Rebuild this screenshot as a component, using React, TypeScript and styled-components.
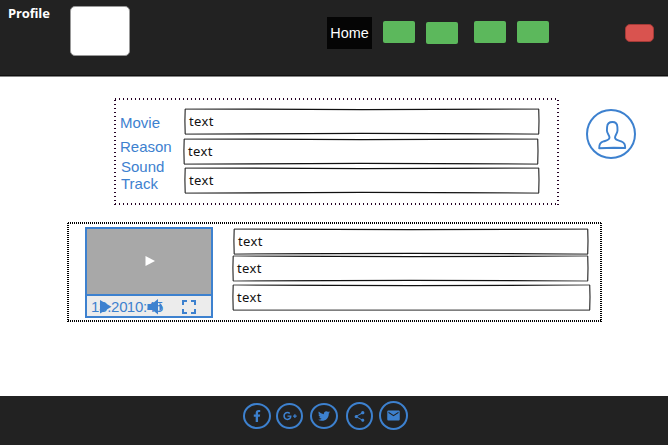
import React from "react";
import styled, { createGlobalStyle } from "styled-components";
import { FaFacebookF, FaGooglePlusG, FaTwitter } from "react-icons/fa";
import { MdEmail, MdShare } from "react-icons/md";

const BLUE = "#3d81cf";

const GlobalStyle = createGlobalStyle`
  * { box-sizing: border-box; }
  body { margin: 0; background: #fff; overflow: hidden; }
`;

const Page = styled.div`
  width: 668px;
  height: 445px;
  display: flex;
  flex-direction: column;
  font-family: "Liberation Sans", Arial, sans-serif;
  font-size: 15px;
  color: ${BLUE};
`;

const Header = styled.header`
  height: 77px;
  flex: none;
  display: flex;
  align-items: flex-start;
  background: #222;
  border-bottom: 1px solid #858585;
  box-shadow: inset 0 -1px #101010;
`;

const Brand = styled.div`
  width: 62px;
  padding: 5px 0 0 8px;
  font: bold 13px/17px "Open Sans", "Noto Sans", sans-serif;
  letter-spacing: -0.15px;
  color: #fff;
`;

const Logo = styled.div`
  width: 60px;
  height: 50px;
  margin: 6px 0 0 8px;
  background: #fff;
  border: 1px solid #999;
  border-radius: 5px;
`;

const Nav = styled.nav`
  display: flex;
  align-items: flex-start;
  margin: 17px 0 0 197px;
`;

const ActiveLink = styled.a`
  width: 45px;
  height: 32px;
  font-size: 14.4px;
  line-height: 32px;
  text-align: center;
  color: #fff;
  background: #050505;
`;

const NavButton = styled.button<{ $gap: number; $drop?: number }>`
  width: 32px;
  height: 22px;
  padding: 0;
  margin: ${(p) => 4 + (p.$drop ?? 0)}px 0 0 ${(p) => p.$gap}px;
  border: 0;
  border-radius: 2px;
  background: #5cb85c;
`;

const DangerButton = styled.button`
  width: 29px;
  height: 18px;
  padding: 0;
  margin: 24px 0 0 76px;
  border: 1px solid #a43a37;
  border-radius: 5px;
  background: #d9534f;
`;

const Main = styled.main`
  height: 319px;
  flex: none;
`;

const TopRow = styled.div`
  display: flex;
  align-items: flex-start;
  padding: 21px 0 0 114px;
`;

const DottedPanel = styled.section<{ $width: number; $height: number; $pitch: number; $ink: string }>`
  width: ${(p) => p.$width}px;
  height: ${(p) => p.$height}px;
  flex: none;
  display: flex;
  align-items: flex-start;
  ${(p) => {
    const across = `linear-gradient(to right, ${p.$ink} 1px, transparent 1px)`;
    const down = `linear-gradient(to bottom, ${p.$ink} 1px, transparent 1px)`;
    const half = p.$pitch / 2;
    return `background:
      ${across} 1px 0 / ${p.$pitch}px 2px repeat-x,
      ${across} 1px 100% / ${p.$pitch}px 2px repeat-x,
      ${down} 0 ${half}px / 2px ${p.$pitch}px repeat-y,
      ${down} 100% ${half}px / 2px ${p.$pitch}px repeat-y;`;
  }}
`;

const Labels = styled.div`
  width: 69px;
  padding: 16px 0 0 6px;
  line-height: 17px;
`;

const Label = styled.div<{ $gap?: number; $indent?: number }>`
  margin: ${(p) => p.$gap ?? 0}px 0 0 ${(p) => p.$indent ?? 0}px;
`;

const Fields = styled.div<{ $top: number }>`
  display: flex;
  flex-direction: column;
  padding-top: ${(p) => p.$top}px;
`;

const FieldBox = styled.div<{ $width: number; $gap: number; $indent: number }>`
  position: relative;
  width: ${(p) => p.$width}px;
  height: 27px;
  margin: ${(p) => p.$gap}px 0 0 ${(p) => p.$indent}px;
  padding-left: 5px;
  font: 13px/26px "Noto Sans", sans-serif;
  letter-spacing: 0.4px;
  color: #111;
`;

const Outline = styled.svg`
  position: absolute;
  inset: 0;
  overflow: visible;
`;

const Avatar = styled.svg`
  margin: 11px 0 0 27px;
`;

const BottomRow = styled.div`
  padding: 17px 0 0 67px;
`;

const Player = styled.div`
  width: 128px;
  height: 91px;
  margin: 5px 19px 0 18px;
  border: 2px solid ${BLUE};
  background: #ececec;
`;

const Screen = styled.div`
  height: 66px;
  display: flex;
  align-items: center;
  justify-content: center;
  padding-left: 2px;
  background: #a8a8a8;
  border-bottom: 2px solid ${BLUE};
  height: 67px;
`;

const Controls = styled.div`
  position: relative;
  height: 20px;
  padding-left: 4px;
  display: flex;
  line-height: 22px;
`;

const Time = styled.span<{ $shift?: number }>`
  margin-left: ${(p) => p.$shift ?? 0}px;
  letter-spacing: -0.25px;
`;

const ControlIcons = styled.svg`
  position: absolute;
  left: 0;
  top: 0;
`;

const Footer = styled.footer`
  height: 49px;
  flex: none;
  display: flex;
  align-items: flex-start;
  padding-left: 243px;
  background: #222;
`;

const Social = styled.a<{ $w: number; $h: number; $top: number; $gap?: number; $size: number }>`
  width: ${(p) => p.$w}px;
  height: ${(p) => p.$h}px;
  margin: ${(p) => p.$top}px 0 0 ${(p) => p.$gap ?? 0}px;
  display: flex;
  align-items: center;
  justify-content: center;
  border: 2px solid ${BLUE};
  border-radius: 50%;
  font-size: ${(p) => p.$size}px;
  color: ${BLUE};
`;

type FieldProps = { id: string; width?: number; gap?: number; indent?: number; flatBottom?: boolean };

function Field({ id, width = 356, gap = 0, indent = 0, flatBottom }: FieldProps) {
  const r = width - 1;
  const m = width * 0.5;
  return (
    <FieldBox $width={width} $gap={gap} $indent={indent}>
      <Outline width={width} height={27} fill="none">
        <defs>
          <linearGradient id={id} gradientUnits="userSpaceOnUse" x1="0" y1="0" x2={width} y2="0">
            <stop offset="0" stopColor="#555" />
            <stop offset="0.2" stopColor="#111" />
            <stop offset="0.8" stopColor="#111" />
            <stop offset="1" stopColor="#555" />
          </linearGradient>
        </defs>
        <path d={`M1 1 L${m} 1.6 L${r} 1`} stroke={`url(#${id})`} strokeWidth="1.25" />
        <path
          d={flatBottom ? `M1 26 H${r}` : `M1 26 L${m} 25.4 L${r} 26`}
          stroke={flatBottom ? "#555" : `url(#${id})`}
          strokeWidth="1.25"
        />
        <path d={`M1.2 1 L0.9 13 L1.2 26 M${r - 0.3} 1 L${r} 13 L${r - 0.3} 26`} stroke="#333" strokeWidth="1.2" />
      </Outline>
      text
    </FieldBox>
  );
}

export default function App() {
  return (
    <Page>
      <GlobalStyle />
      <Header>
        <Brand>Profile</Brand>
        <Logo />
        <Nav>
          <ActiveLink>Home</ActiveLink>
          <NavButton $gap={11} />
          <NavButton $gap={11} $drop={1} />
          <NavButton $gap={16} />
          <NavButton $gap={11} />
        </Nav>
        <DangerButton />
      </Header>
      <Main>
        <TopRow>
          <DottedPanel $width={445} $height={107} $pitch={4} $ink="#240024">
            <Labels>
              <Label>Movie</Label>
              <Label $gap={7}>Reason</Label>
              <Label $gap={3} $indent={1}>Sound</Label>
              <Label $indent={1}>Track</Label>
            </Labels>
            <Fields $top={10}>
              <Field id="movie" indent={1} />
              <Field id="reason" gap={3} />
              <Field id="track" gap={2} indent={1} />
            </Fields>
          </DottedPanel>
          <Avatar width="50" height="50" viewBox="0 0 50 50" fill="none" stroke={BLUE}>
            <circle cx="25" cy="25" r="24" strokeWidth="2" />
            <path
              d="M13.2 39.2 C13 35.5 14.2 33.4 17.5 32.4 C20.8 31.4 23.4 31.2 23.5 28.5 C23.5 26.5 21 24.2 20.9 21.5 L21.1 18 C21.3 14.5 23.2 13 26.5 13 C29.7 13 31.2 14.7 31.4 18 L31.5 21.5 C31.4 24.2 29 26.5 29 28.5 C29 31.2 32 31.2 35.2 32.4 C38.2 33.5 39.4 35.5 39.2 39 L28 38.7 Z"
              strokeWidth="1.9"
              strokeLinejoin="round"
            />
          </Avatar>
        </TopRow>
        <BottomRow>
          <DottedPanel $width={535} $height={100} $pitch={2} $ink="#000">
            <Player>
              <Screen>
                <svg width="10" height="14" fill="#fff">
                  <path d="M0.5 1 L10 6 L0.5 11 Z" />
                </svg>
              </Screen>
              <Controls>
                <Time>13.20</Time>
                <Time $shift={-0.5}>10:45</Time>
                <ControlIcons width="124" height="20" fill={BLUE}>
                  <path d="M13 4 L24.5 10.7 L13 17.5 Z" />
                  <path d="M60.5 8 H65 L71 3 V18.5 L65 13.5 H60.5 Z" />
                  <path d="M72.5 6.5 Q78 11 72.5 15.5 Z" />
                  <path
                    d="M96 9 V5 H100 M104 5 H108 V9 M108 13 V17 H104 M100 17 H96 V13"
                    fill="none"
                    stroke={BLUE}
                    strokeWidth="2"
                  />
                </ControlIcons>
              </Controls>
            </Player>
            <Fields $top={6}>
              <Field id="first" indent={1} />
              <Field id="second" width={357} />
              <Field id="third" gap={2} width={359} flatBottom />
            </Fields>
          </DottedPanel>
        </BottomRow>
      </Main>
      <Footer>
        <Social $w={28} $h={26} $top={7} $size={12}><FaFacebookF /></Social>
        <Social $w={27} $h={26} $top={7} $gap={5} $size={14}><FaGooglePlusG /></Social>
        <Social $w={28} $h={26} $top={7} $gap={7} $size={12}><FaTwitter /></Social>
        <Social $w={27} $h={28} $top={6} $gap={8} $size={13}><MdShare /></Social>
        <Social $w={29} $h={29} $top={5} $gap={6} $size={15}><MdEmail /></Social>
      </Footer>
    </Page>
  );
}
